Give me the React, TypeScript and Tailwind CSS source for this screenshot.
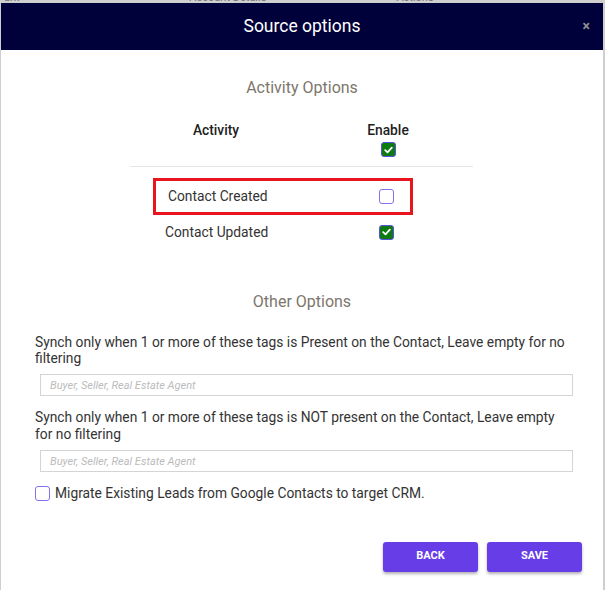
import React, { useState } from 'react';

const font = { fontFamily: 'Roboto, "Liberation Sans", sans-serif' };

const Check: React.FC<{ checked: boolean; onToggle: () => void }> = ({ checked, onToggle }) => (
  <button
    type="button"
    onClick={onToggle}
    className={
      'w-[15px] h-[15px] rounded-[3px] border flex items-center justify-center shrink-0 ' +
      (checked ? 'bg-[#0d7a12] border-[#5b4fe0]' : 'bg-white border-[#8a6ef2]')
    }
  >
    {checked && (
      <svg width="9" height="8" viewBox="0 0 9 8" fill="none">
        <path d="M1.2 4.2 L3.5 6.3 L7.8 1.6" stroke="white" strokeWidth="1.8" strokeLinecap="round" strokeLinejoin="round" />
      </svg>
    )}
  </button>
);

const App: React.FC = () => {
  const [all, setAll] = useState(true);
  const [created, setCreated] = useState(false);
  const [updated, setUpdated] = useState(true);
  const [migrate, setMigrate] = useState(false);

  return (
    <div className="w-[605px] h-[590px] bg-[#cfcfcf] overflow-hidden" style={font}>
      {/* page behind the modal */}
      <div className="h-[3px] overflow-hidden relative">
        <div className="flex text-[11px] text-[#777] leading-none -mt-[8px]">
          <span className="ml-[4px]">ark</span>
          <span className="ml-[170px]">Account Details</span>
          <span className="ml-[130px]">Actions</span>
        </div>
      </div>

      <div className="ml-[1px] w-[602px] h-[587px] bg-white flex flex-col">
        <div className="h-[47px] bg-[#00003a] flex items-center justify-center relative">
          <h2 className="text-white text-[17.5px]">Source options</h2>
          <button className="absolute right-[13px] top-[16px] text-[#8f8f8f] text-[14px] font-bold leading-none">×</button>
        </div>

        <div className="flex-1 flex flex-col text-[13.8px]">
          <h3 className="mt-[27px] text-center text-[16px] leading-[22px] text-[#7d766c]">Activity Options</h3>

          <div className="w-[343px] ml-[129px] mt-[22px]">
            <div className="flex border-b border-[#e6e6e6] pb-[9px]">
              <div className="w-[172px] text-center font-medium text-[#222] leading-[18px]">Activity</div>
              <div className="flex-1 flex flex-col items-center">
                <span className="font-medium text-[#222] leading-[18px] pl-[1px]">Enable</span>
                <div className="mt-[3px] pl-[1px]">
                  <Check checked={all} onToggle={() => setAll(!all)} />
                </div>
              </div>
            </div>

            <div className="ml-[23px] mt-[11px] w-[260px] h-[37px] border-[3px] border-[#e8141e] flex items-center justify-between pl-[12px] pr-[16px]">
              <span className="text-[#333]">Contact Created</span>
              <Check checked={created} onToggle={() => setCreated(!created)} />
            </div>

            <div className="ml-[35px] mt-[8px] w-[229px] h-[18px] flex items-center justify-between">
              <span className="text-[#333]">Contact Updated</span>
              <Check checked={updated} onToggle={() => setUpdated(!updated)} />
            </div>
          </div>

          <h3 className="mt-[50px] text-center text-[16px] leading-[22px] text-[#7d766c]">Other Options</h3>

          <div className="pl-[34px] pr-[28px] mt-[21px] text-[#333]">
            <p className="leading-[16px]">Synch only when 1 or more of these tags is Present on the Contact, Leave empty for no filtering</p>
            <input
              className="mt-[8px] ml-[5px] w-[533px] h-[22px] border border-[#d4d4d4] px-[9px] text-[11px] italic placeholder:text-[#bbb] outline-none"
              placeholder="Buyer, Seller, Real Estate Agent"
            />
            <p className="mt-[13px] leading-[17px]">Synch only when 1 or more of these tags is NOT present on the Contact, Leave empty for no filtering</p>
            <input
              className="mt-[7px] ml-[5px] w-[533px] h-[22px] border border-[#d4d4d4] px-[9px] text-[11px] italic placeholder:text-[#bbb] outline-none"
              placeholder="Buyer, Seller, Real Estate Agent"
            />
            <label className="mt-[11px] flex items-center gap-[5px]">
              <Check checked={migrate} onToggle={() => setMigrate(!migrate)} />
              <span>Migrate Existing Leads from Google Contacts to target CRM.</span>
            </label>
          </div>

          <div className="mt-[38px] flex justify-end gap-[9px] pr-[21px]">
            <button className="w-[95px] h-[30px] rounded-[3px] bg-[#673de8] text-white text-[11px] font-bold shadow-[0_2px_3px_rgba(0,0,0,0.3)]">BACK</button>
            <button className="w-[95px] h-[30px] rounded-[3px] bg-[#673de8] text-white text-[11px] font-bold shadow-[0_2px_3px_rgba(0,0,0,0.3)]">SAVE</button>
          </div>
        </div>
      </div>
    </div>
  );
};

export default App;
